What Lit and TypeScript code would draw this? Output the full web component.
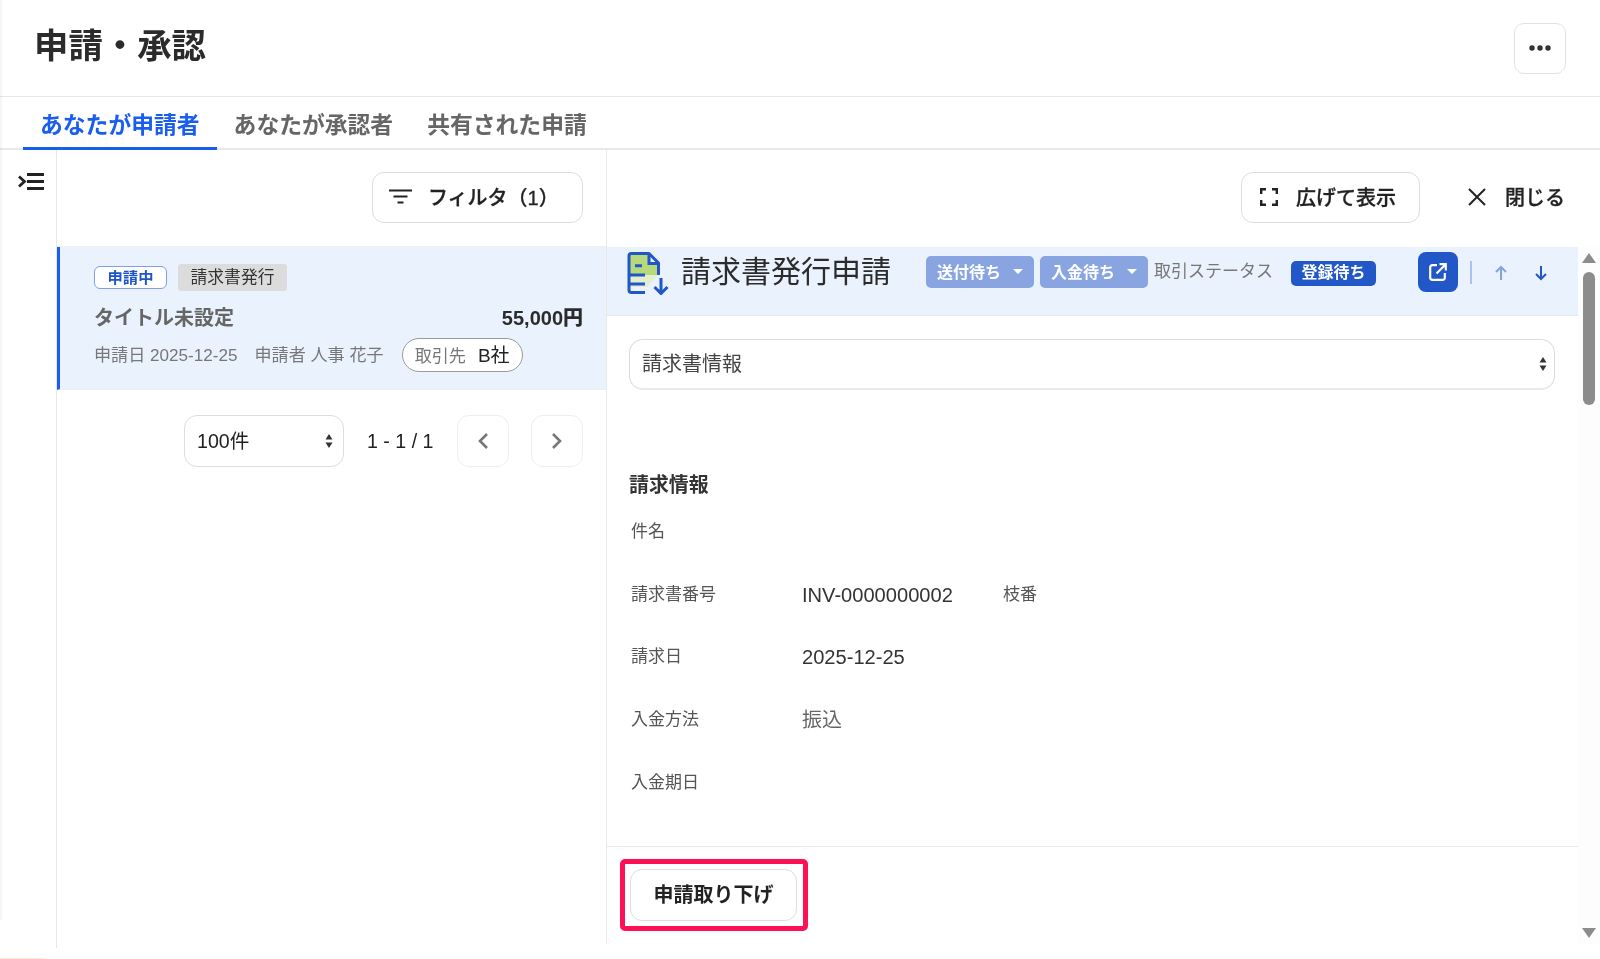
import { LitElement, html, css } from "lit";
import { customElement } from "lit/decorators.js";

const sortArrows = html`<svg width="8" height="16" viewBox="0 0 8 16"><path d="M4 1 7.5 6.5H.5zM4 15 .5 9.5h7z" fill="#333"/></svg>`;

@customElement("app-root")
export class AppRoot extends LitElement {
  static styles = css`
    :host {
      display: flex;
      flex-direction: column;
      position: relative;
      height: 959px;
      overflow: hidden;
      background: #fff;
      color: #222;
      font-family: "Liberation Sans", "Noto Sans CJK JP", sans-serif;
    }
    .edge {
      position: absolute;
      left: 0;
      top: 0;
      width: 3px;
      height: 920px;
      background: linear-gradient(90deg, #f2f2f2, #fff);
      mix-blend-mode: multiply;
    }
    .peach {
      position: absolute;
      left: 0;
      bottom: 0;
      width: 45px;
      height: 1px;
      background: #fde9da;
    }
    header {
      flex: none;
      display: flex;
      align-items: center;
      justify-content: space-between;
      padding: 0 34px 4px 34px;
      box-sizing: border-box;
      border-bottom: 1px solid #e6e6e6;
      height: 97px;
    }
    h1 {
      margin: 0;
      font-size: 34.4px;
      font-weight: 700;
      color: #2b2b2b;
      line-height: 46px;
    }
    .more {
      width: 52px;
      height: 51px;
      box-sizing: border-box;
      margin-top: 4px;
      border: 1px solid #e2e2e2;
      border-radius: 10px;
      display: flex;
      align-items: center;
      justify-content: center;
    }
    .tabs {
      height: 53px;
      flex: none;
      display: flex;
      padding-left: 23px;
      box-sizing: border-box;
      border-bottom: 2px solid #e8e8e8;
    }
    .tab {
      padding: 0 17px;
      height: 53px;
      box-sizing: border-box;
      font-size: 22.8px;
      font-weight: 700;
      line-height: 56px;
      color: #666;
    }
    .tab.on {
      color: #1a5ef0;
      border-bottom: 3px solid #1a5ef0;
    }
    main {
      display: flex;
      height: 798px;
      flex: none;
      align-items: flex-start;
    }
    .side {
      width: 57px;
      height: 798px;
      box-sizing: border-box;
      border-right: 1px solid #e8e8e8;
      padding: 23px 0 0 18px;
    }
    .side svg {
      display: block;
    }
    .list {
      width: 550px;
      height: 794px;
      box-sizing: border-box;
      border-right: 1px solid #e8e8e8;
    }
    .list-top {
      height: 97px;
      box-sizing: border-box;
      padding: 22px 23px 0 0;
      display: flex;
      justify-content: flex-end;
      align-items: flex-start;
      border-bottom: 1px solid #f0f0f0;
    }
    .btn {
      display: flex;
      align-items: center;
      box-sizing: border-box;
      height: 51px;
      padding-bottom: 2px;
      border: 1px solid #dedede;
      border-radius: 12px;
      background: #fff;
      font-size: 20px;
      font-weight: 500;
      -webkit-text-stroke: 0.3px #222;
      color: #222;
      white-space: nowrap;
    }
    .filter {
      width: 211px;
      padding-left: 16px;
      gap: 16px;
    }
    .item {
      height: 143px;
      box-sizing: border-box;
      background: #eaf2fe;
      border-left: 3px solid #1a5ef0;
      border-bottom: 1px solid #eee;
      padding: 17px 23px 0 34px;
    }
    .tags {
      display: flex;
      align-items: center;
      gap: 11px;
      height: 27px;
    }
    .tag-a {
      width: 73px;
      height: 23px;
      box-sizing: border-box;
      background: #fff;
      border: 1px solid #7f9fe6;
      border-radius: 6px;
      color: #1c55c9;
      font-size: 15.3px;
      font-weight: 700;
      line-height: 21px;
      text-align: center;
    }
    .tag-b {
      width: 109px;
      height: 27px;
      background: #dcdcdc;
      border-radius: 3px;
      color: #333;
      font-size: 16.8px;
      line-height: 27px;
      text-align: center;
    }
    .title-row {
      display: flex;
      justify-content: space-between;
      align-items: center;
      margin-top: 11px;
      height: 28px;
      font-size: 20px;
      font-weight: 700;
      color: #666;
    }
    .title-row b {
      color: #2b2b2b;
    }
    .meta {
      display: flex;
      align-items: center;
      margin-top: 7px;
      height: 34px;
      font-size: 17.1px;
      color: #777;
      white-space: nowrap;
    }
    .meta span {
      margin-top: -2px;
    }
    .meta span + span {
      margin-left: 17px;
    }
    .meta .pill {
      box-sizing: border-box;
      width: 121px;
      height: 34px;
      margin: 2px 0 0 18px;
      border: 1px solid #9a9a9a;
      border-radius: 17px;
      background: #fff;
      line-height: 33px;
      padding-left: 12px;
    }
    .pill em {
      font-style: normal;
      color: #222;
      font-size: 19px;
      margin-left: 12px;
    }
    .pager {
      display: flex;
      align-items: center;
      margin-top: 25px;
      padding-left: 127px;
      font-size: 19.6px;
      color: #222;
    }
    .per {
      width: 160px;
      height: 52px;
      box-sizing: border-box;
      border: 1px solid #ddd;
      border-radius: 13px;
      display: flex;
      align-items: center;
      justify-content: space-between;
      padding: 0 10px 0 12px;
      font-size: 19.6px;
    }
    .per span {
      margin-top: -4px;
    }
    .range {
      margin: 0 24px 0 23px;
      width: 66px;
      white-space: nowrap;
    }
    .page {
      width: 52px;
      height: 52px;
      box-sizing: border-box;
      border: 1px solid #eee;
      border-radius: 12px;
      display: flex;
      align-items: center;
      justify-content: center;
    }
    .page + .page {
      margin-left: 22px;
    }
    .detail {
      width: 993px;
      height: 794px;
      display: flex;
      flex-direction: column;
    }
    .detail-top {
      height: 97px;
      flex: none;
      box-sizing: border-box;
      display: flex;
      justify-content: flex-end;
      align-items: flex-start;
      padding: 22px 35px 0 0;
    }
    .expand {
      width: 179px;
      padding-left: 18px;
      gap: 18px;
    }
    .close {
      display: flex;
      align-items: center;
      height: 49px;
      margin-left: 48px;
      gap: 19px;
      font-size: 20px;
      font-weight: 500;
      -webkit-text-stroke: 0.3px #222;
    }
    .detail-wrap {
      flex: 1;
      display: flex;
      min-height: 0;
    }
    .pane {
      width: 971px;
      display: flex;
      flex-direction: column;
      position: relative;
    }
    .band {
      height: 69px;
      flex: none;
      box-sizing: border-box;
      background: #eaf2fe;
      border-bottom: 1px solid #e2e6ee;
      padding: 5px 0 0 20px;
      display: flex;
      align-items: flex-start;
    }
    .band > * {
      flex: none;
    }
    .doc {
      display: block;
      margin-right: 12px;
    }
    .band h2 {
      margin: 0 36px 0 0;
      width: 209px;
      font-size: 30px;
      font-weight: 400;
      line-height: 40px;
      color: #2b2b2b;
      white-space: nowrap;
    }
    .status {
      width: 108px;
      height: 32px;
      margin: 4px 6px 0 0;
      box-sizing: border-box;
      padding: 0 11px 2px;
      background: #88a5e2;
      border-radius: 5px;
      color: #fff;
      font-size: 16px;
      font-weight: 700;
      display: flex;
      align-items: center;
      justify-content: space-between;
    }
    .trade {
      width: 119px;
      margin: 7px 18px 0 0;
      font-size: 17px;
      line-height: 26px;
      color: #777;
      white-space: nowrap;
    }
    .reg {
      width: 85px;
      height: 25px;
      margin: 9px 42px 0 0;
      background: #2257c8;
      border-radius: 5px;
      color: #fff;
      font-size: 16px;
      font-weight: 700;
      line-height: 23px;
      text-align: center;
    }
    .ext {
      width: 40px;
      height: 40px;
      box-sizing: border-box;
      background: #2257c8;
      border-radius: 8px;
      display: flex;
      align-items: center;
      justify-content: center;
    }
    .sep {
      width: 2px;
      height: 23px;
      margin: 9px 23px 0 12px;
      background: #a9c4f0;
    }
    .arrow {
      display: block;
      margin: 13px 28px 0 0;
    }
    .body {
      flex: 1;
      padding: 23px 23px 0 22px;
      min-height: 0;
    }
    .pick {
      height: 51px;
      box-sizing: border-box;
      border: 1px solid #ddd;
      border-bottom: 2px solid #eaeaea;
      border-radius: 14px;
      display: flex;
      align-items: center;
      justify-content: space-between;
      padding: 0 7px 3px 12px;
      font-size: 20px;
      color: #444;
    }
    .pick svg {
      margin-top: 3px;
    }
    h3 {
      margin: 81px 0 0 0;
      font-size: 19.9px;
      font-weight: 700;
      line-height: 28px;
      color: #333;
    }
    .fields {
      margin: 0 0 0 2px;
      padding-top: 21px;
    }
    .field {
      display: grid;
      grid-template-columns: 171px 201px auto;
      height: 62.7px;
      font-size: 17px;
      line-height: 24px;
      color: #555;
    }
    .field .val {
      font-size: 20.1px;
      color: #333;
    }
    .field .val.soft {
      color: #666;
    }
    footer {
      height: 98px;
      flex: none;
      box-sizing: border-box;
      border-top: 1px solid #eaeaea;
      padding: 22px 0 0 23px;
    }
    .drop {
      width: 167px;
      height: 52px;
      padding-bottom: 3px;
      justify-content: center;
      font-weight: 700;
      -webkit-text-stroke: 0;
    }
    .mark {
      position: absolute;
      left: 13px;
      bottom: 13px;
      width: 188px;
      height: 72px;
      box-sizing: border-box;
      border: 5px solid #ff0f55;
      border-radius: 5px;
    }
    .bar {
      width: 22px;
      height: 697px;
      box-sizing: border-box;
      background: #fdfdfd;
      display: flex;
      flex-direction: column;
      align-items: center;
      padding-top: 6px;
    }
    .bar svg {
      display: block;
    }
    .thumb {
      width: 12px;
      height: 133px;
      margin-top: 9px;
      background: #8c8c8c;
      border-radius: 6px;
    }
    .bar .down {
      margin-top: 523px;
    }
  `;

  render() {
    return html`
      <header>
        <h1>申請・承認</h1>
        <div class="more">
          <svg width="24" height="6" viewBox="0 0 24 6"><circle cx="4" cy="3" r="2.7" fill="#333"/><circle cx="12" cy="3" r="2.7" fill="#333"/><circle cx="20" cy="3" r="2.7" fill="#333"/></svg>
        </div>
      </header>
      <nav class="tabs">
        <div class="tab on">あなたが申請者</div>
        <div class="tab">あなたが承認者</div>
        <div class="tab">共有された申請</div>
      </nav>
      <main>
        <div class="side">
          <svg width="26" height="17" viewBox="0 0 26 17" fill="none" stroke="#222" stroke-width="2.8">
            <path d="M1 3.500 6.500 8.500 1 13.500"/>
            <path d="M9 1.500H26M9 8.500H26M9 15.500H26"/>
          </svg>
        </div>
        <section class="list">
          <div class="list-top">
            <div class="btn filter">
              <svg width="23" height="15" viewBox="0 0 23 15" fill="none" stroke="#222" stroke-width="2"><path d="M0 1.500H23M4.500 7.500H18.500M8.500 13.500H14.500"/></svg>
              <span>フィルタ（1）</span>
            </div>
          </div>
          <article class="item">
            <div class="tags">
              <div class="tag-a">申請中</div>
              <div class="tag-b">請求書発行</div>
            </div>
            <div class="title-row"><span>タイトル未設定</span><b>55,000円</b></div>
            <div class="meta">
              <span>申請日 2025-12-25</span>
              <span>申請者 人事 花子</span>
              <span class="pill">取引先<em>B社</em></span>
            </div>
          </article>
          <div class="pager">
            <div class="per"><span>100件</span> ${sortArrows}</div>
            <div class="range">1 - 1 / 1</div>
            <div class="page">
              <svg width="12" height="18" viewBox="0 0 12 18" fill="none" stroke="#777" stroke-width="2.6"><path d="M10 2 3 9l7 7"/></svg>
            </div>
            <div class="page">
              <svg width="12" height="18" viewBox="0 0 12 18" fill="none" stroke="#777" stroke-width="2.6"><path d="M2 2l7 7-7 7"/></svg>
            </div>
          </div>
        </section>
        <section class="detail">
          <div class="detail-top">
            <div class="btn expand">
              <svg width="18" height="18" viewBox="0 0 18 18" fill="none" stroke="#222" stroke-width="2.4"><path d="M1.200 6V1.200H6M12 1.200h4.800V6M16.800 12v4.800H12M6 16.800H1.200V12"/></svg>
              <span>広げて表示</span>
            </div>
            <div class="close">
              <svg width="18" height="18" viewBox="0 0 18 18" fill="none" stroke="#222" stroke-width="2"><path d="M1 1l16 16M17 1 1 17"/></svg>
              <span>閉じる</span>
            </div>
          </div>
          <div class="detail-wrap">
            <div class="pane">
              <div class="band">
                <svg class="doc" width="42" height="43" viewBox="0 0 42 43" fill="none">
                  <path d="M3 3H22V12H31V23H3z" fill="#b7d97c"/>
                  <path d="M3 23H31L20 35H3z" fill="#e4efcd"/>
                  <path d="M18 40.500H4.500Q2 40.500 2 38V4Q2 1.500 4.500 1.500H22L31.500 11V23" stroke="#2257c8" stroke-width="3" stroke-linejoin="round"/>
                  <path d="M22 2V11.500H31M8 13.700H15M2 23H18M2 32H18M34 26V41M27.500 35 34 41.500 40.500 35" stroke="#2257c8" stroke-width="3"/>
                </svg>
                <h2>請求書発行申請</h2>
                <div class="status">送付待ち <svg width="10" height="5" viewBox="0 0 10 5"><path d="M0 0h10L5 5z" fill="#fff"/></svg></div>
                <div class="status">入金待ち <svg width="10" height="5" viewBox="0 0 10 5"><path d="M0 0h10L5 5z" fill="#fff"/></svg></div>
                <div class="trade">取引ステータス</div>
                <div class="reg">登録待ち</div>
                <div class="ext">
                  <svg width="18" height="18" viewBox="0 0 18 18" fill="none" stroke="#fff" stroke-width="2.2"><path d="M8 2.200H3.500Q1.200 2.200 1.200 4.500V14.500Q1.200 16.800 3.500 16.800H13.500Q15.800 16.800 15.800 14.500V10M7.500 10.500 16.500 1.500M10.500 1.200H16.800V7.500"/></svg>
                </div>
                <div class="sep"></div>
                <svg class="arrow" width="12" height="16" viewBox="0 0 12 16" fill="none" stroke="#85a3e3" stroke-width="2"><path d="M6 15V2M1 7l5-5 5 5"/></svg>
                <svg class="arrow" width="12" height="16" viewBox="0 0 12 16" fill="none" stroke="#2257c8" stroke-width="2"><path d="M6 1V14M1 9l5 5 5-5"/></svg>
              </div>
              <div class="body">
                <div class="pick">請求書情報 ${sortArrows}</div>
                <h3>請求情報</h3>
                <div class="fields">
                  <div class="field"><span>件名</span></div>
                  <div class="field"><span>請求書番号</span><span class="val">INV-0000000002</span><span>枝番</span></div>
                  <div class="field"><span>請求日</span><span class="val">2025-12-25</span></div>
                  <div class="field"><span>入金方法</span><span class="val soft">振込</span></div>
                  <div class="field"><span>入金期日</span></div>
                </div>
              </div>
              <footer>
                <div class="btn drop">申請取り下げ</div>
              </footer>
              <div class="mark"></div>
            </div>
            <div class="bar">
              <svg width="14" height="10" viewBox="0 0 14 10"><path d="M7 0 14 10H0z" fill="#8c8c8c"/></svg>
              <div class="thumb"></div>
              <svg class="down" width="14" height="10" viewBox="0 0 14 10"><path d="M7 10 0 0H14z" fill="#8c8c8c"/></svg>
            </div>
          </div>
        </section>
      </main>
      <div class="edge"></div>
      <div class="peach"></div>
    `;
  }
}
